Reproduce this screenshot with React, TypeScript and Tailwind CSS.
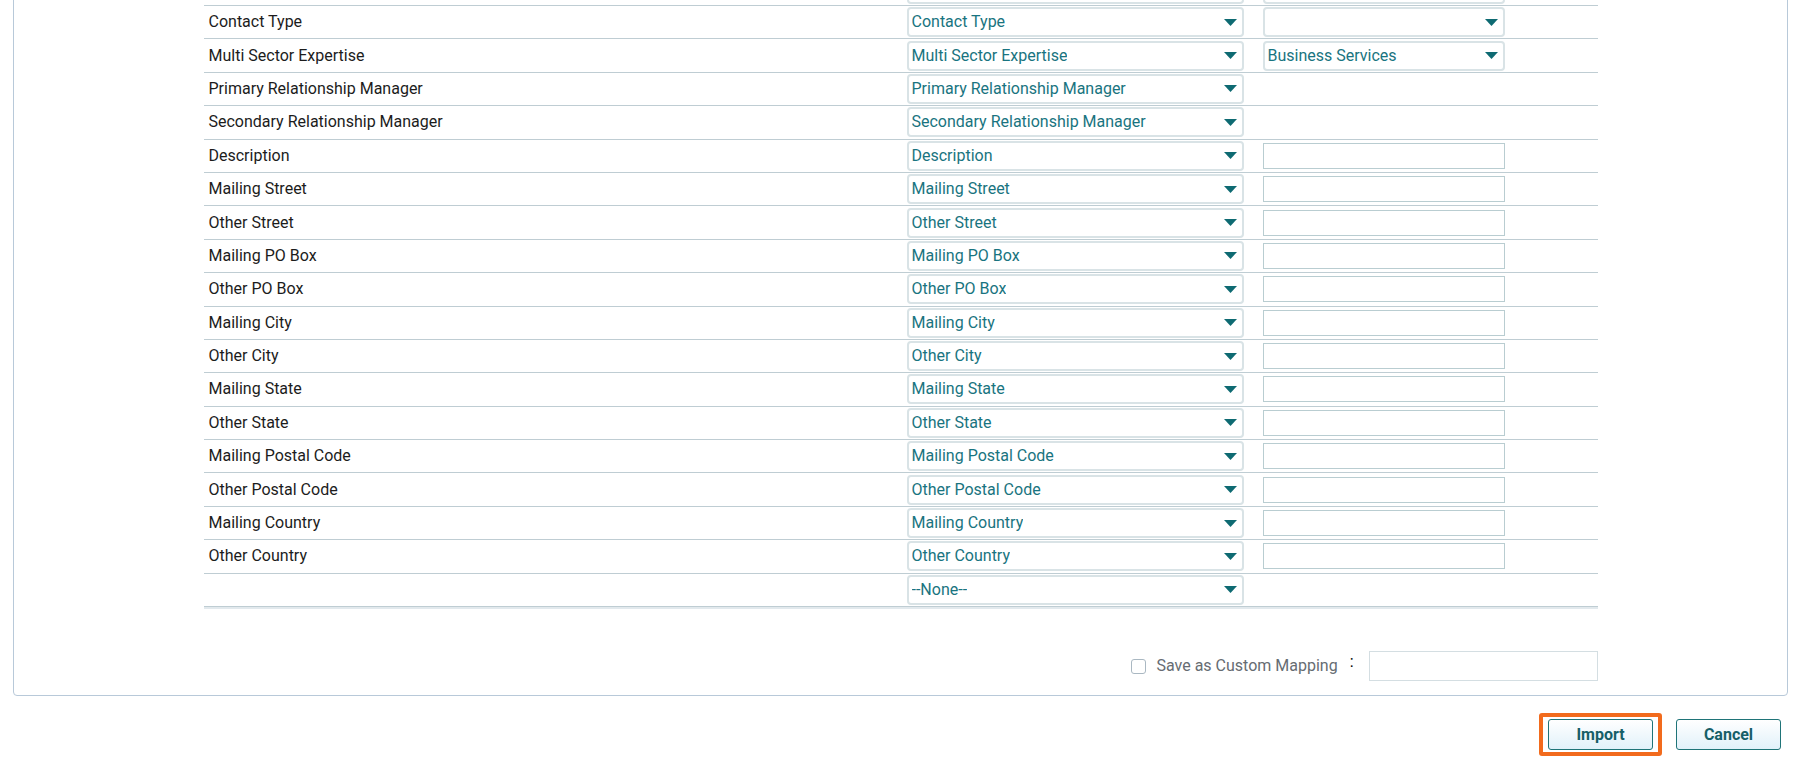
import React from "react";

type Third = "none" | "select" | "input";

interface Row {
  label: string;
  value: string;
  third: Third;
  thirdValue?: string;
}

const rows: Row[] = [
  { label: "Contact Type", value: "Contact Type", third: "select", thirdValue: "" },
  { label: "Multi Sector Expertise", value: "Multi Sector Expertise", third: "select", thirdValue: "Business Services" },
  { label: "Primary Relationship Manager", value: "Primary Relationship Manager", third: "none" },
  { label: "Secondary Relationship Manager", value: "Secondary Relationship Manager", third: "none" },
  { label: "Description", value: "Description", third: "input" },
  { label: "Mailing Street", value: "Mailing Street", third: "input" },
  { label: "Other Street", value: "Other Street", third: "input" },
  { label: "Mailing PO Box", value: "Mailing PO Box", third: "input" },
  { label: "Other PO Box", value: "Other PO Box", third: "input" },
  { label: "Mailing City", value: "Mailing City", third: "input" },
  { label: "Other City", value: "Other City", third: "input" },
  { label: "Mailing State", value: "Mailing State", third: "input" },
  { label: "Other State", value: "Other State", third: "input" },
  { label: "Mailing Postal Code", value: "Mailing Postal Code", third: "input" },
  { label: "Other Postal Code", value: "Other Postal Code", third: "input" },
  { label: "Mailing Country", value: "Mailing Country", third: "input" },
  { label: "Other Country", value: "Other Country", third: "input" },
  { label: "", value: "--None--", third: "none" },
];

function Caret() {
  return (
    <svg width="13" height="7" viewBox="0 0 13 7" className="shrink-0">
      <path d="M0 0 H13 L6.5 7 Z" fill="#0e6a72" />
    </svg>
  );
}

function Select({ value, width }: { value: string; width: string }) {
  return (
    <div
      className={`${width} h-[30px] flex items-center justify-between pl-[3px] pr-[5px] border-2 border-[#d9e3e6] rounded-[4px] bg-white`}
    >
      <span className="text-[#197480] truncate">{value}</span>
      <Caret />
    </div>
  );
}

function MappingRow({ row, last }: { row: Row; last?: boolean }) {
  return (
    <div
      className={`flex items-center h-[33.4px] border-b border-[#bfcdd3] ${
        last ? "shadow-[0_2px_0_#e2e9ed]" : ""
      }`}
    >
      <div className="w-[703px] pl-[5px] text-[#1c1c1c]">{row.label}</div>
      <div className="w-[356px]">
        <Select value={row.value} width="w-[337px]" />
      </div>
      <div className="w-[242px]">
        {row.third === "select" && (
          <Select value={row.thirdValue ?? ""} width="w-[242px]" />
        )}
        {row.third === "input" && (
          <div className="w-[242px] h-[26px] border border-[#b9cdd1] bg-white" />
        )}
      </div>
    </div>
  );
}

export default function App() {
  return (
    <div
      className="w-[1798px] h-[777px] overflow-hidden bg-white text-[16px]"
      style={{ fontFamily: "Roboto, 'Liberation Sans', sans-serif" }}
    >
      {/* card, scrolled so only its lower part shows */}
      <div className="ml-[13px] mr-[10px] -mt-[41px] pt-[12.6px] pb-[14px] border border-[#b8c9d9] rounded-[4px]">
        <div className="w-[1394px] mx-auto">
          {/* row above, scrolled out of view */}
          <div className="flex items-center h-[33.4px] border-b border-[#bfcdd3]">
            <div className="w-[703px]" />
            <div className="w-[356px]">
              <Select value="" width="w-[337px]" />
            </div>
            <div className="w-[242px]">
              <Select value="" width="w-[242px]" />
            </div>
          </div>

          {rows.map((r, i) => (
            <MappingRow key={i} row={r} last={i === rows.length - 1} />
          ))}

          <div className="flex items-center justify-end mt-[44px]">
            <div className="w-[15px] h-[15px] border border-[#aab8c2] rounded-[3px] bg-white" />
            <span className="ml-[10px] text-[#666c72]">Save as Custom Mapping</span>
            <span className="ml-[12px] text-black -mt-[8px]">:</span>
            <div className="ml-[15px] w-[229px] h-[30px] border border-[#d4dee2] bg-white" />
          </div>
        </div>
      </div>

      {/* action buttons */}
      <div className="flex justify-end items-center gap-[14px] mt-[17px] pr-[17px]">
        <div className="border-4 border-[#f26b1d] rounded-[3px] px-[5px] py-[2px]">
          <button className="w-[105px] h-[31px] border border-[#1f7478] rounded-[3px] bg-gradient-to-b from-white to-[#e1f1fa] font-bold text-[#165f68]">
            Import
          </button>
        </div>
        <button className="w-[105px] h-[31px] border border-[#1f7478] rounded-[3px] bg-gradient-to-b from-white to-[#e1f1fa] font-bold text-[#165f68]">
          Cancel
        </button>
      </div>
    </div>
  );
}
